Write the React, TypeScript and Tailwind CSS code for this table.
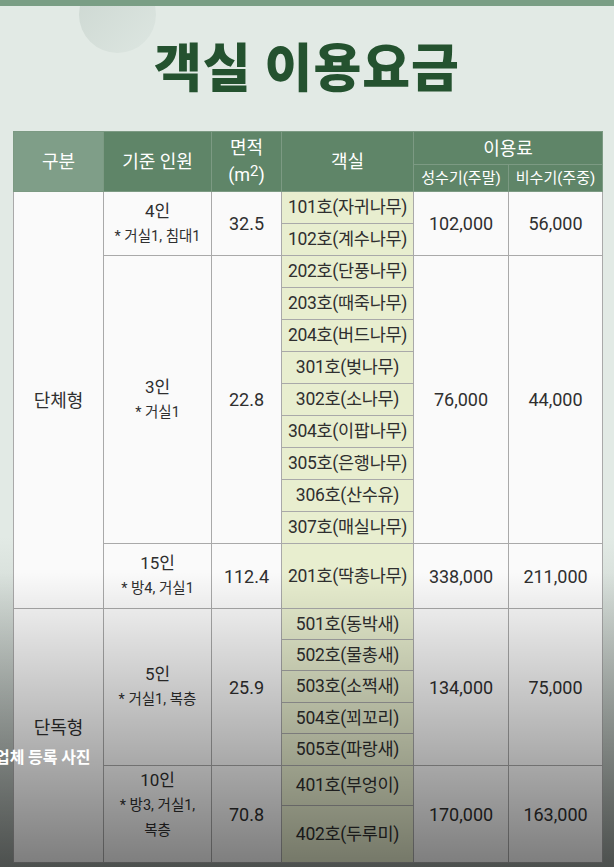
import React from "react";

const cell = "border border-[#a9a9a9] text-center align-middle";
const room = "border border-[#a9a9a9] bg-[#e8eecf] text-center align-middle text-[17.5px] tracking-[-0.3px]";
const head = "border border-[#7c9a83] bg-[#5f8568] text-white font-normal text-center align-middle";

function People({ main, sub, lift }: { main: string; sub: string[]; lift?: boolean }) {
  return (
    <div className={lift ? "flex flex-col items-center pb-[18px] leading-[25px]" : "flex flex-col items-center leading-[25px]"}>
      <span className="text-[17px]">{main}</span>
      {sub.map((s) => (
        <span key={s} className="text-[14.5px]">
          {s}
        </span>
      ))}
    </div>
  );
}

export default function App() {
  return (
    <div
      className="relative h-[867px] w-[614px] overflow-hidden bg-[linear-gradient(180deg,#e2eae5_0%,#e2eae5_62%,#9aa19d_100%)] text-[#2f2f2f]"
      style={{ fontFamily: "Roboto, 'Noto Sans CJK KR', sans-serif" }}
    >
      <div className="absolute left-[79px] top-[-24px] h-[77px] w-[77px] rounded-full bg-[linear-gradient(135deg,#ccd7d1,#dde6e1)]" />

      <div className="relative h-[6px] bg-[#7a9e85]" />

      <div className="relative flex h-[125px] items-center justify-center pb-[8px]">
        <h1
          className="text-[52px] font-extrabold tracking-[1px] text-[#24522f]"
          style={{ fontFamily: "'Noto Sans CJK KR', sans-serif" }}
        >
          객실 이용요금
        </h1>
      </div>

      <div className="relative flex justify-start pl-[13px]">
        <table className="w-[589px] table-fixed border-collapse">
          <colgroup>
            <col className="w-[90px]" />
            <col className="w-[108px]" />
            <col className="w-[70px]" />
            <col className="w-[132px]" />
            <col className="w-[95px]" />
            <col className="w-[94px]" />
          </colgroup>
          <thead>
            <tr className="h-[33px] text-[18px]">
              <th rowSpan={2} className="border border-[#7c9a83] bg-[#7f9e88] text-center align-middle font-normal text-white">
                구분
              </th>
              <th rowSpan={2} className={head}>
                기준 인원
              </th>
              <th rowSpan={2} className={head}>
                <div className="flex flex-col items-center leading-[27px]">
                  <span>면적</span>
                  <span>
                    (m<span className="relative -top-[5px] text-[15px]">2</span>)
                  </span>
                </div>
              </th>
              <th rowSpan={2} className={head}>
                객실
              </th>
              <th colSpan={2} className={head}>
                이용료
              </th>
            </tr>
            <tr className="h-[27px] text-[15px]">
              <th className={head}>성수기(주말)</th>
              <th className={head}>비수기(주중)</th>
            </tr>
          </thead>
          <tbody className="bg-[#fafafa] text-[18px]">
            <tr className="h-[32px]">
              <td rowSpan={12} className={cell}>
                단체형
              </td>
              <td rowSpan={2} className={cell}>
                <People main="4인" sub={["* 거실1, 침대1"]} />
              </td>
              <td rowSpan={2} className={cell}>
                32.5
              </td>
              <td className={room}>101호(자귀나무)</td>
              <td rowSpan={2} className={cell}>
                102,000
              </td>
              <td rowSpan={2} className={cell}>
                56,000
              </td>
            </tr>
            <tr className="h-[32px]">
              <td className={room}>102호(계수나무)</td>
            </tr>
            <tr className="h-[32px]">
              <td rowSpan={9} className={cell}>
                <People main="3인" sub={["* 거실1"]} />
              </td>
              <td rowSpan={9} className={cell}>
                22.8
              </td>
              <td className={room}>202호(단풍나무)</td>
              <td rowSpan={9} className={cell}>
                76,000
              </td>
              <td rowSpan={9} className={cell}>
                44,000
              </td>
            </tr>
            <tr className="h-[32px]">
              <td className={room}>203호(때죽나무)</td>
            </tr>
            <tr className="h-[32px]">
              <td className={room}>204호(버드나무)</td>
            </tr>
            <tr className="h-[32px]">
              <td className={room}>301호(벚나무)</td>
            </tr>
            <tr className="h-[32px]">
              <td className={room}>302호(소나무)</td>
            </tr>
            <tr className="h-[32px]">
              <td className={room}>304호(이팝나무)</td>
            </tr>
            <tr className="h-[32px]">
              <td className={room}>305호(은행나무)</td>
            </tr>
            <tr className="h-[32px]">
              <td className={room}>306호(산수유)</td>
            </tr>
            <tr className="h-[32px]">
              <td className={room}>307호(매실나무)</td>
            </tr>
            <tr className="h-[65px]">
              <td className={cell}>
                <People main="15인" sub={["* 방4, 거실1"]} />
              </td>
              <td className={cell}>112.4</td>
              <td className={room}>201호(딱총나무)</td>
              <td className={cell}>338,000</td>
              <td className={cell}>211,000</td>
            </tr>
            <tr className="h-[31px]">
              <td rowSpan={7} className={cell}>
                <div className="pb-[16px]">단독형</div>
              </td>
              <td rowSpan={5} className={cell}>
                <People main="5인" sub={["* 거실1, 복층"]} />
              </td>
              <td rowSpan={5} className={cell}>
                25.9
              </td>
              <td className={room}>501호(동박새)</td>
              <td rowSpan={5} className={cell}>
                134,000
              </td>
              <td rowSpan={5} className={cell}>
                75,000
              </td>
            </tr>
            <tr className="h-[31px]">
              <td className={room}>502호(물총새)</td>
            </tr>
            <tr className="h-[32px]">
              <td className={room}>503호(소쩍새)</td>
            </tr>
            <tr className="h-[31px]">
              <td className={room}>504호(꾀꼬리)</td>
            </tr>
            <tr className="h-[32px]">
              <td className={room}>505호(파랑새)</td>
            </tr>
            <tr className="h-[40px]">
              <td rowSpan={2} className={cell}>
                <People main="10인" sub={["* 방3, 거실1,", "복층"]} lift />
              </td>
              <td rowSpan={2} className={cell}>
                70.8
              </td>
              <td className={room}>401호(부엉이)</td>
              <td rowSpan={2} className={cell}>
                170,000
              </td>
              <td rowSpan={2} className={cell}>
                163,000
              </td>
            </tr>
            <tr className="h-[57px]">
              <td className={room}>402호(두루미)</td>
            </tr>
          </tbody>
        </table>
      </div>

      <div className="pointer-events-none absolute inset-0 bg-[linear-gradient(180deg,rgba(0,0,0,0)_0%,rgba(0,0,0,0)_66%,rgba(0,0,0,0.5)_100%)]" />

      <div
        className="absolute left-[-5px] top-[744px] text-[16px] font-bold text-white"
        style={{ fontFamily: "'Noto Sans CJK KR', sans-serif" }}
      >
        업체 등록 사진
      </div>
    </div>
  );
}
